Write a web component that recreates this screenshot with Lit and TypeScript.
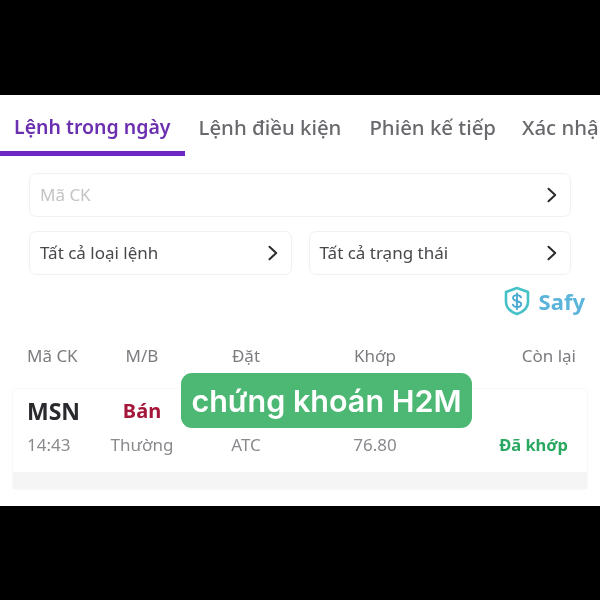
import { LitElement, html, css, svg } from "lit";
import { customElement } from "lit/decorators.js";

const chevron = svg`<svg class="chev" width="12" height="16" viewBox="0 0 12 16" fill="none"><path d="M2.5 1.8 9.2 8 2.5 14.2" stroke="#2b2b2e" stroke-width="2" stroke-linecap="round" stroke-linejoin="round"/></svg>`;

@customElement("app-root")
export class AppRoot extends LitElement {
  static styles = css`
    :host { display: block; width: 600px; height: 600px; background: #000; overflow: hidden;
      font-family: "Noto Sans", "Open Sans", sans-serif; }
    .screen { position: relative; margin-top: 95px; height: 411px; background: #fff; overflow: hidden;
      display: flex; flex-direction: column; filter: blur(0.45px); }
    .tabs { display: flex; flex: none; height: 61px; white-space: nowrap; }
    .tab { flex: none; padding: 18px 14px 0; font-size: 20.4px; line-height: 28px; font-weight: 500; color: #69696d; box-sizing: border-box; height: 61px; }
    .tab:last-child { margin-left: -2px; }
    .tab.on { color: #6b2fb0; font-size: 19.5px; font-weight: 600; border-bottom: 5px solid #6f27c4; }
    .filters { display: flex; flex-direction: column; gap: 14px; padding: 17px 29px 0 29px; }
    .row { display: flex; gap: 17px; }
    .box { flex: 1; height: 44px; box-sizing: border-box; border: 1.5px solid #f1f1f3; border-radius: 7px; background: #fff;
      display: flex; align-items: center; justify-content: space-between; padding: 0 12px 1px 10px;
      font-size: 17px; color: #48484c; }
    .box.ph { flex: none; color: #c4c4c6; }
    .brand { display: flex; align-items: center; justify-content: flex-end; gap: 9px; padding: 11px 15px 0 0; height: 30px; }
    .brand span { font-size: 22px; font-weight: 700; color: #5bb4dc; line-height: 30px; }
    .grid { display: grid; grid-template-columns: 73px 84px 124px 134px 1fr; align-items: center; }
    .grid > :nth-child(5n + 2), .grid > :nth-child(5n + 3), .grid > :nth-child(5n + 4) { text-align: center; }
    .grid > :nth-child(5n) { text-align: right; }
    .head { margin: 28px 24px 0 27px; font-size: 17px; color: #7c7c80; line-height: 24px; }
    .card { margin: 20px 12px 0; height: 102px; box-sizing: border-box; border: 1px solid #f8f8f9; border-radius: 4px; display: flex; flex-direction: column; }
    .lines { flex: 1; padding: 10px 11px 0 14px; row-gap: 10px; grid-template-rows: 24px 24px; align-content: start; font-size: 17px; color: #8a8a8e; line-height: 24px; }
    .sym { font-size: 23px; font-weight: 700; color: #2a2a2e; }
    .sell { font-size: 20px; font-weight: 700; color: #a5173a; }
    .done { font-weight: 700; color: #2aa862; font-size: 16.5px; padding-right: 8px; }
    .band { height: 17px; background: #f5f5f5; flex: none; }
    .note { position: absolute; left: 181px; top: 278px; width: 291px; height: 55px; border-radius: 11px; background: #4cb874;
      font-family: Inter, "Noto Sans", sans-serif; color: #fff; font-size: 30.500px; font-weight: 600; line-height: 55px; text-align: center; white-space: nowrap; }
  `;

  render() {
    return html`<div class="screen">
      <div class="tabs">
        <div class="tab on">Lệnh trong ngày</div>
        <div class="tab">Lệnh điều kiện</div>
        <div class="tab">Phiên kế tiếp</div>
        <div class="tab">Xác nhận</div>
      </div>
      <div class="filters">
        <div class="box ph">Mã CK ${chevron}</div>
        <div class="row">
          <div class="box">Tất cả loại lệnh ${chevron}</div>
          <div class="box">Tất cả trạng thái ${chevron}</div>
        </div>
      </div>
      <div class="brand">
        <svg width="26" height="30" viewBox="0 0 26 30" fill="none">
          <path d="M13 2 24 6v10c0 5.6-4.6 9.8-11 12C6.6 25.8 2 21.600 2 16V6z" stroke="#45c1c8" stroke-width="2.600" stroke-linejoin="round"/>
          <path d="M17 11.400c-.6-1.500-2.200-2.200-4-2.200-2.200 0-4 1-4 2.900 0 4 8.200 2 8.200 6 0 1.900-1.900 3-4.200 3-2 0-3.700-.9-4.200-2.500M13 7.300v16" stroke="#45a8d0" stroke-width="1.800" stroke-linecap="round"/>
        </svg>
        <span>Safy</span>
      </div>
      <div class="grid head">
        <div>Mã CK</div><div>M/B</div><div>Đặt</div><div>Khớp</div><div>Còn lại</div>
      </div>
      <div class="card">
        <div class="grid lines">
          <div class="sym">MSN</div><div class="sell">Bán</div><div></div><div></div><div></div>
          <div>14:43</div><div>Thường</div><div>ATC</div><div>76.80</div><div class="done">Đã khớp</div>
        </div>
        <div class="band"></div>
      </div>
      <div class="note">chứng khoán H2M</div>
    </div>`;
  }
}
